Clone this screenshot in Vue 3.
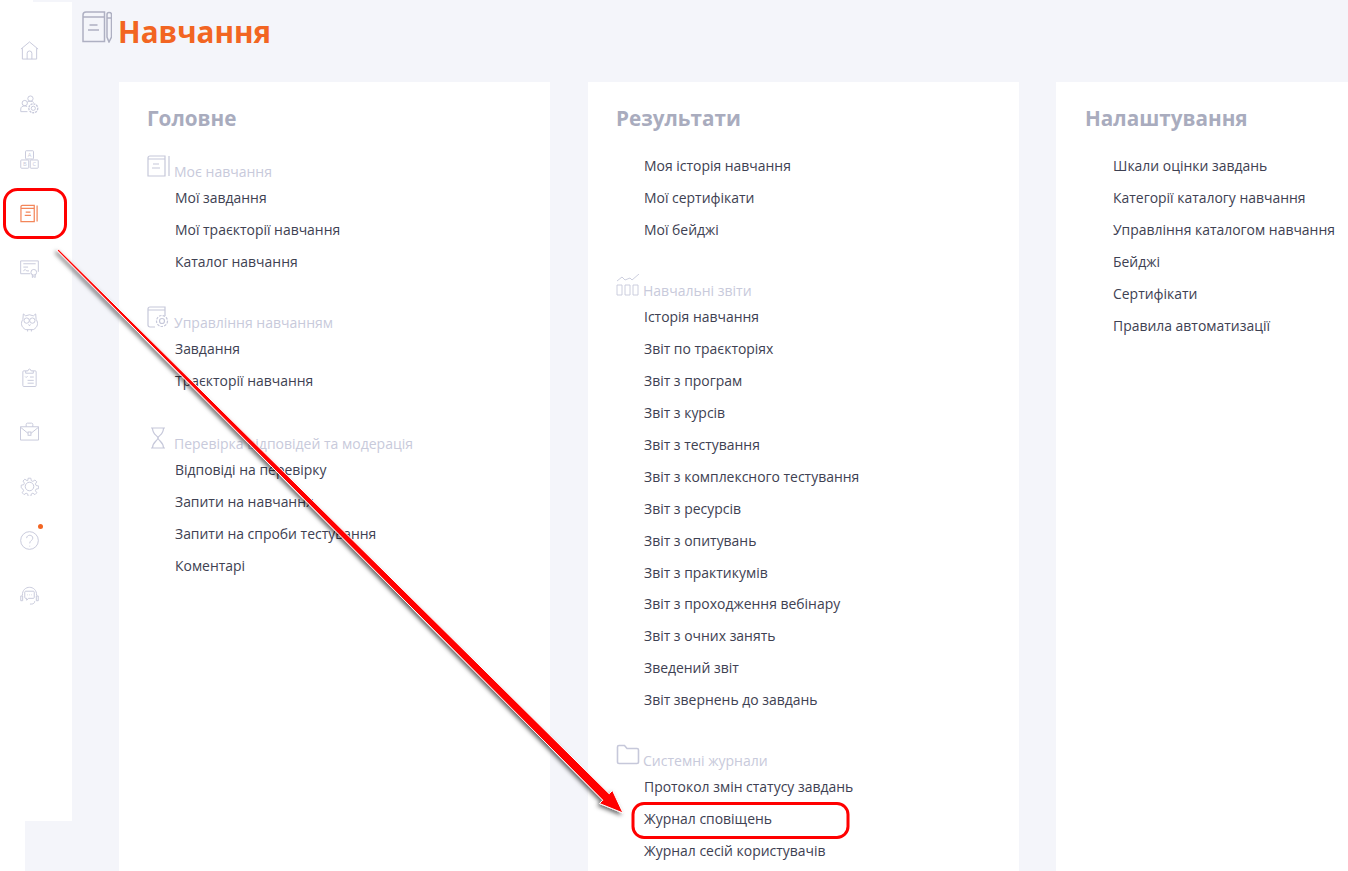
<template>
  <div class="page">
    <div class="shell">
      <aside class="sidebar">
        <div class="side-item">
          <svg viewBox="0 0 20 20"><path d="M1 8.500 10 1l9 7.500M2.500 7.500V19h15V7.500M7.500 19v-6a2.500 2.500 0 0 1 5 0v6" /></svg>
        </div>
        <div class="side-item">
          <svg viewBox="0 0 20 20">
            <circle cx="11" cy="3.800" r="2.800" /><circle cx="5" cy="8.500" r="2.800" />
            <path d="M.8 17.500v-2.800c0-2 1.700-3.200 4.200-3.200 1 0 1.800.2 2.500.7M7.700 7.500c1-.7 2-1 3.300-1 1.500 0 2.800.5 3.500 1.500M.8 17.500h7" />
            <circle cx="14" cy="14" r="2.200" /><circle cx="14" cy="14" r="4.700" stroke-dasharray="2.200 .9" stroke-width="1.400" />
          </svg>
        </div>
        <div class="side-item">
          <svg viewBox="0 0 20 20">
            <rect x="5.800" y=".8" width="8.400" height="8.700" rx=".8" /><rect x=".8" y="10.500" width="8.400" height="8.700" rx=".8" /><rect x="10.800" y="10.500" width="8.400" height="8.700" rx=".8" />
            <text x="10" y="7.400" class="block-letter">A</text><text x="5" y="17.200" class="block-letter">B</text><text x="15" y="17.200" class="block-letter">C</text>
          </svg>
        </div>
        <div class="side-item active">
          <svg viewBox="0 0 20 20">
            <path d="M1 18.500V3c0-1 .7-1.500 1.500-1.500h12.500v17zM1 4.500h14M18 1.500v17M6 8.500h5M5 12h6.500" />
          </svg>
        </div>
        <div class="side-item">
          <svg viewBox="0 0 20 20">
            <path d="M11 15.500H.7V2h18.600v11.500M3.500 5h13M3.500 8.500h5M3.500 12.500l2-1.500 1.500 1.500h2.500" />
            <circle cx="14.500" cy="14" r="3" /><path d="M13 16.500V19.500l1.500-1 1.500 1v-3" />
          </svg>
        </div>
        <div class="side-item">
          <svg viewBox="0 0 20 20">
            <path d="M3.500 1 6 3a8 8 0 0 1 8 0l2.500-2 .5 6c2.500 3 2 8-3 10.500H6C1 15 .5 10 3 7zM8 17.500v2M12 17.500v2" />
            <circle cx="7" cy="8" r="2.800" /><circle cx="13" cy="8" r="2.800" /><path d="M9 12l1 1.500 1-1.500" />
          </svg>
        </div>
        <div class="side-item">
          <svg viewBox="0 0 20 20">
            <path d="M6 3H4a1 1 0 0 0-1 1v14.500a1 1 0 0 0 1 1h12a1 1 0 0 0 1-1V4a1 1 0 0 0-1-1h-2" />
            <path d="M6 5.500V3h2.500c0-2.500 3-2.500 3 0H14v2.500zM5.500 9l1 1L8 8.500M10.500 9.500h4M8 13h6.500M8 16h6.500" />
          </svg>
        </div>
        <div class="side-item">
          <svg viewBox="0 0 20 20">
            <path d="M.5 5h19v14H.5zM.5 5.500l8 6.500M19.500 5.500l-8 6.500M6.500 5V2.500c0-.8.5-1.300 1.300-1.300h4.400c.8 0 1.300.5 1.300 1.300V5" />
            <rect x="8.500" y="10.500" width="3" height="3.500" />
          </svg>
        </div>
        <div class="side-item">
          <svg viewBox="0 0 20 20">
            <circle cx="10" cy="10" r="4.500" />
            <path d="M8.500 .7h3l.5 2.800 1.800.8 2.300-1.600 2.100 2.100-1.600 2.300.8 1.800 2.800.5v3l-2.800.5-.8 1.800 1.600 2.300-2.100 2.100-2.300-1.600-1.800.8-.5 2.800h-3l-.5-2.800-1.800-.8-2.300 1.600-2.100-2.100 1.600-2.300-.8-1.800L.7 11.500v-3l2.800-.5.8-1.800-1.600-2.300 2.100-2.100 2.300 1.600L8 3.500z" transform="translate(.6 .6) scale(.94)" />
          </svg>
        </div>
        <div class="side-item has-dot">
          <svg viewBox="0 0 20 20">
            <circle cx="10" cy="10" r="9.300" />
            <path d="M7 7.500c0-4 6.500-4 6.500 0 0 2.500-3.300 2.500-3.300 5.500M10.200 15.500v.8" />
          </svg>
          <span class="dot"></span>
        </div>
        <div class="side-item">
          <svg viewBox="0 0 20 20">
            <path d="M2.500 10C2-1.500 18-1.500 17.500 10M.8 10.500h2v5h-2zM17.200 10.500h2v5h-2zM15.500 16c0 2-1.500 3-3.500 3h-1.500" />
            <path d="M6 5.500h8a1 1 0 0 1 1 1v5.500a1 1 0 0 1-1 1H9l-2 2v-2H6a1 1 0 0 1-1-1V6.500a1 1 0 0 1 1-1z" />
            <path d="M7.500 9.300h.6M9.700 9.300h.6M11.900 9.300h.6" />
          </svg>
        </div>
      </aside>

      <main class="content">
        <header class="page-head">
          <svg class="page-icon" viewBox="0 0 30 32">
            <path d="M1 30.500V4c0-1.500 1-3 3-3h18.500v29.500zM1 6h21.500M27 1.500c1.500 0 2.500 1 2.500 2V26L27 31 25 26V3.500c0-1 1-2 2-2zM25 7h4.500M7.500 14h8M6 19h11" />
          </svg>
          <h1>Навчання</h1>
        </header>

        <div class="columns">
          <section class="card">
            <h2>Головне</h2>
            <div class="group">
              <div class="group-title">
                <svg class="group-icon" viewBox="0 0 24 22">
                  <path d="M1 21V3c0-1 .7-2 2-2h15v20zM1 4h17M22 1v20M6 9h6M5 13h8" />
                </svg>
                Моє навчання
              </div>
              <a v-for="l in learning" :key="l" class="link">{{ l }}</a>
            </div>
            <div class="group group-wide">
              <div class="group-title">
                <svg class="group-icon" viewBox="0 0 24 22">
                  <path d="M8 21H3c-1.300 0-2-1-2-2V3c0-1 .7-2 2-2h15v9M1 4h17" />
                  <circle cx="15" cy="15" r="2.500" /><circle cx="15" cy="15" r="5.500" stroke-dasharray="2.500 1.200" />
                </svg>
                Управління навчанням
              </div>
              <a v-for="l in manage" :key="l" class="link">{{ l }}</a>
            </div>
            <div class="group">
              <div class="group-title">
                <svg class="group-icon" viewBox="0 0 24 22">
                  <path d="M4 1h14M4 21h14M5.500 1c0 7 5 7 5.500 10 .5-3 5.500-3 5.500-10M5.500 21c0-6 5-7 5.500-10 .5 3 5.500 4 5.500 10" />
                </svg>
                Перевірка відповідей та модерація
              </div>
              <a v-for="l in review" :key="l" class="link">{{ l }}</a>
            </div>
          </section>

          <section class="card">
            <h2>Результати</h2>
            <div class="group">
              <a v-for="l in results" :key="l" class="link">{{ l }}</a>
            </div>
            <div class="group">
              <div class="group-title">
                <svg class="group-icon chart" viewBox="0 0 24 22">
                  <path d="M1 11h5v10H1zM9 11h5v10H9zM17 11h5v10h-5zM1 7l5-4 3 3 5-2 2 2 7-6" />
                </svg>
                Навчальні звіти
              </div>
              <a v-for="l in reports" :key="l" class="link">{{ l }}</a>
            </div>
            <div class="group">
              <div class="group-title">
                <svg class="group-icon" viewBox="0 0 24 22">
                  <path d="M1.500 18V3c0-1 .7-1.500 1.500-1.500h5.500l2.500 3h10c1 0 1.500 .7 1.500 1.500v12c0 1-.7 1.500-1.500 1.500H3c-1 0-1.500-.7-1.500-1.500z" stroke-width="1.600" />
                </svg>
                Системні журнали
              </div>
              <a v-for="l in logs" :key="l" class="link">{{ l }}</a>
            </div>
          </section>

          <section class="card">
            <h2>Налаштування</h2>
            <div class="group">
              <a v-for="l in settings" :key="l" class="link">{{ l }}</a>
            </div>
          </section>
        </div>
      </main>
    </div>

    <!-- annotations drawn over the screenshot -->
    <svg class="marks" width="1348" height="871" viewBox="0 0 1348 871">
      <defs>
        <filter id="arrow-shadow" x="-10%" y="-10%" width="120%" height="120%">
          <feDropShadow dx="-2" dy="2" stdDeviation="2.200" flood-color="#000" flood-opacity=".6" />
        </filter>
      </defs>
      <polygon
        points="58.700,249.300 609.200,793.800 612.500,790.500 623,813 599.500,803.500 602.800,800.200 57.300,250.700"
        fill="#f00"
        stroke="#fff"
        stroke-width="1"
        filter="url(#arrow-shadow)"
      />
      <rect x="4.500" y="189.500" width="61" height="48" rx="13" class="mark-box" />
      <rect x="633" y="803.500" width="215" height="34" rx="11" class="mark-box" />
    </svg>
  </div>
</template>

<script setup>
const learning = ['Мої завдання', 'Мої траєкторії навчання', 'Каталог навчання']
const manage = ['Завдання', 'Траєкторії навчання']
const review = ['Відповіді на перевірку', 'Запити на навчання', 'Запити на спроби тестування', 'Коментарі']
const results = ['Моя історія навчання', 'Мої сертифікати', 'Мої бейджі']
const reports = [
  'Історія навчання',
  'Звіт по траєкторіях',
  'Звіт з програм',
  'Звіт з курсів',
  'Звіт з тестування',
  'Звіт з комплексного тестування',
  'Звіт з ресурсів',
  'Звіт з опитувань',
  'Звіт з практикумів',
  'Звіт з проходження вебінару',
  'Звіт з очних занять',
  'Зведений звіт',
  'Звіт звернень до завдань'
]
const logs = ['Протокол змін статусу завдань', 'Журнал сповіщень', 'Журнал сесій користувачів']
const settings = [
  'Шкали оцінки завдань',
  'Категорії каталогу навчання',
  'Управління каталогом навчання',
  'Бейджі',
  'Сертифікати',
  'Правила автоматизації'
]
</script>

<style>
html, body {
  background: #fff;
  overflow: hidden;
}
</style>

<style scoped>
.page {
  position: relative;
  width: 1348px;
  height: 871px;
  overflow: hidden;
  padding-left: 25px;
  box-sizing: border-box;
  background: #fff;
  font-family: "Open Sans", "Noto Sans", sans-serif;
}

.shell {
  display: flex;
  width: 1600px;
  height: 871px;
  background: #f4f5fa;
}

.sidebar {
  position: relative;
  margin-left: -25px;
  flex: none;
  width: 72px;
  height: 821px;
  padding-top: 23px;
  box-sizing: border-box;
  background: #fff;
}

/* thin strip of page background above the rail */
.sidebar::before {
  content: "";
  position: absolute;
  left: 33px;
  right: 0;
  top: 0;
  height: 2px;
  background: #f4f5fa;
}

.side-item {
  position: relative;
  display: flex;
  align-items: center;
  justify-content: center;
  width: 58px;
  height: 54.500px;
}

.side-item svg {
  width: 19px;
  height: 19px;
  fill: none;
  stroke: #c6c8da;
  stroke-width: 1;
}

.side-item.active svg {
  stroke: #f3865a;
  stroke-width: 1.300;
}

.block-letter {
  font-size: 6px;
  font-family: "Open Sans", sans-serif;
  text-anchor: middle;
  stroke: none;
  fill: #c6c8da;
}

.dot {
  position: absolute;
  left: 37.500px;
  top: 10px;
  width: 5px;
  height: 5px;
  border-radius: 50%;
  background: #f26522;
}

.content {
  flex: none;
  width: 1528px;
  padding-left: 10px;
  box-sizing: border-box;
}

.page-head {
  display: flex;
  align-items: flex-start;
  height: 82px;
  padding-top: 11px;
  box-sizing: border-box;
}

.page-icon {
  width: 30px;
  height: 32px;
  margin-right: 6px;
  fill: none;
  stroke: #aeb0c2;
  stroke-width: 1.500;
}

h1 {
  margin: 3px 0 0;
  font-size: 29.600px;
  line-height: 36px;
  font-weight: 700;
  color: #f26522;
}

.columns {
  display: flex;
  gap: 38px;
  padding-left: 37px;
}

.card {
  flex: none;
  width: 431px;
  height: 900px;
  padding: 20px 28px 0;
  box-sizing: border-box;
  background: #fff;
}

.card:nth-child(2) {
  margin-right: -1px;
}

.card:nth-child(3) {
  padding-left: 29px;
}

h2 {
  margin: 0 0 16px;
  font-size: 20.700px;
  line-height: 32px;
  font-weight: 700;
  color: #a9acbe;
}

.group {
  margin-bottom: 23.200px;
}

.group-wide {
  margin-bottom: 25.400px;
}

.group-title {
  position: relative;
  height: 32px;
  padding: 12px 0 0 27px;
  box-sizing: border-box;
  font-size: 14px;
  line-height: 20px;
  color: #c8cadb;
}

.group-icon {
  position: absolute;
  left: 0;
  bottom: 5px;
  width: 24px;
  height: 22px;
  fill: none;
  stroke: #c6c8da;
  stroke-width: 1.200;
}

.group-icon.chart {
  stroke-width: .9;
}

.link {
  display: block;
  height: 31.950px;
  padding-left: 28px;
  font-size: 13.950px;
  line-height: 31.950px;
  color: #3e4152;
  white-space: nowrap;
}

.marks {
  position: absolute;
  left: 0;
  top: 0;
  pointer-events: none;
}

.mark-box {
  fill: none;
  stroke: #f00;
  stroke-width: 3;
}
</style>
